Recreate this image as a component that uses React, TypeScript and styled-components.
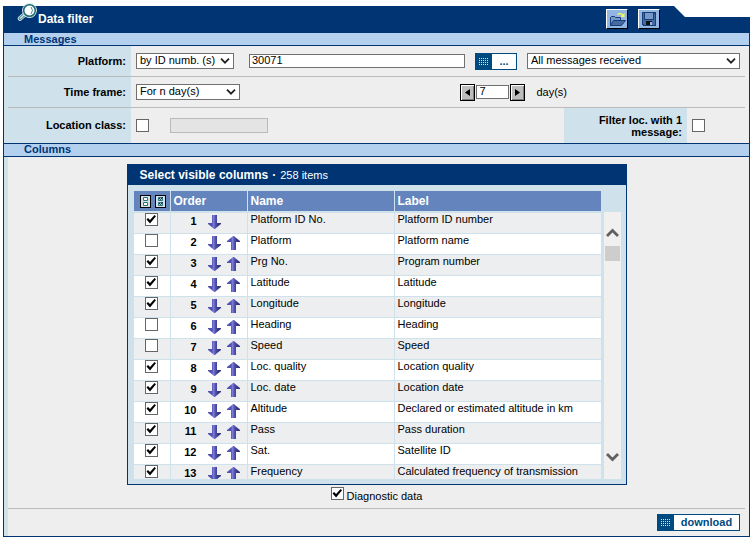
import React from "react";
import styled, { createGlobalStyle, css } from "styled-components";

const navy = "#003473";
const steel = "#004a82";
const pale = "#cfe1ea";
const grey = "#eeeeee";
const rule = "#bababa";

const GlobalStyle = createGlobalStyle`
  * { box-sizing: border-box; }
  body { margin: 0; background: #fff; color: #000; font: 11px/13px "Liberation Sans", Arial, sans-serif; }
  button, input, select { font: inherit; color: inherit; margin: 0; border-radius: 0; }
`;

const Page = styled.main`
  padding: 6px 3px 3px;
`;

const TitleWrap = styled.div`
  position: relative;
`;

const TitleBar = styled.header`
  display: flex;
  justify-content: space-between;
  height: 27px;
  padding: 3px 90px 0 35px;
  background: ${navy};
  clip-path: polygon(0 0, calc(100% - 76px) 0, calc(100% - 65px) 11px, 100% 11px, 100% 100%, 0 100%);
`;

const Magnifier = styled.svg`
  position: absolute;
  left: 14px;
  top: -4px;
  width: 21px;
  height: 20px;
`;

const Title = styled.h1`
  margin: 0;
  padding-top: 3px;
  color: #fff;
  font-size: 12px;
  line-height: 14px;
`;

const Tools = styled.div`
  display: flex;
  gap: 10px;
`;

const ToolButton = styled.button`
  width: 22px;
  height: 20px;
  padding: 0;
  border: 1px solid;
  border-color: #fff #000 #000 #fff;
  background: #93b5e2;
  svg { display: block; width: 20px; height: 18px; }
`;

const Frame = styled.div`
  border: solid ${navy};
  border-width: 0 1px 1px;
  background: ${grey};
`;

const SectionBar = styled.h2<{ $ruled?: boolean }>`
  margin: 0;
  height: ${(p) => (p.$ruled ? 14 : 13)}px;
  padding-left: 20px;
  border-bottom: 1px solid ${navy};
  border-top: ${(p) => (p.$ruled ? `1px solid ${navy}` : "0")};
  background: #b3d1ef;
  color: ${navy};
  font-size: 11px;
  line-height: ${(p) => (p.$ruled ? 11 : 13)}px;
`;

const FormRow = styled.div<{ $tall?: boolean }>`
  display: flex;
  align-items: stretch;
  height: ${(p) => (p.$tall ? 35 : 30)}px;
`;

const Divider = styled.hr`
  height: 1px;
  margin: 0;
  border: solid ${pale};
  border-width: 0 0 0 4px;
  background: ${rule};
  border-right: 4px solid ${grey};
`;

const Caption = styled.label`
  display: flex;
  flex: none;
  align-items: center;
  justify-content: flex-end;
  width: 127px;
  padding-right: 5px;
  background: ${pale};
  font-weight: bold;
  text-align: right;
`;

const SideCaption = styled(Caption)`
  width: 123px;
  margin-left: auto;
  padding-left: 20px;
  line-height: 12px;
`;

const Fields = styled.div`
  display: flex;
  flex: 1;
  align-items: center;
  padding: 0 9px 0 5px;
`;

const ClassFields = styled(Fields)`
  gap: 21px;
`;

const SideFields = styled(Fields)`
  flex: none;
  width: 62px;
`;

const SelectBox = styled.span<{ $width?: number }>`
  position: relative;
  display: flex;
  flex: ${(p) => (p.$width ? `0 0 ${p.$width}px` : "0 1 213px")};
  svg { position: absolute; right: 4px; top: 5px; width: 10px; height: 6px; pointer-events: none; }
`;

const Select = styled.select`
  appearance: none;
  width: 100%;
  height: 16px;
  padding: 0 16px 1px 3px;
  border: 1px solid #707070;
  background: #fff;
  line-height: 13px;
`;

const TextBox = styled.input<{ $width?: number }>`
  flex: ${(p) => (p.$width ? `0 0 ${p.$width}px` : "0 1 216px")};
  min-width: 0;
  width: ${(p) => (p.$width ? `${p.$width}px` : "auto")};
  height: 14px;
  padding: 0 2px 3px;
  border: 1px solid #707070;
  background: #fff;
  &:disabled { height: 15px; border-color: #bababa; background: #e4e4e4; }
`;

const ActionButton = styled.button<{ $wide?: boolean }>`
  display: flex;
  flex: none;
  width: ${(p) => (p.$wide ? 83 : 42)}px;
  height: 17px;
  padding: 0;
  border: 1px solid ${steel};
  background: #fff;
  color: ${steel};
  font-weight: bold;
  line-height: 14px;
  svg { flex: none; width: 16px; height: 15px; background: ${steel}; }
  span { flex: 1; text-align: center; }
`;

const PlatformFields = styled(Fields)`
  > :nth-child(2) { margin-left: 15px; }
  > :nth-child(3) { margin-left: 10px; }
  > :nth-child(4) { margin-left: 10px; }
`;

const DayStepper = styled.div`
  display: flex;
  align-items: center;
  gap: 1px;
  margin-left: auto;
  padding-right: 173px;
  label { padding-left: 10px; }
`;

const StepButton = styled.button`
  width: 15px;
  height: 17px;
  padding: 0;
  border: 1px solid #000;
  background: #bdbdbd;
  box-shadow: inset 1px 1px #fff, inset -1px -1px #808080;
  svg { display: block; width: 13px; height: 15px; }
`;

const Check = styled.input.attrs({ type: "checkbox" })`
  appearance: none;
  display: block;
  flex: none;
  width: 13px;
  height: 13px;
  border: 1px solid #666;
  background: #fff;
  &:checked::before {
    content: "";
    display: block;
    width: 11px;
    height: 11px;
    background: #000;
    clip-path: polygon(9% 50%, 23% 36%, 41% 55%, 82% 9%, 95% 20%, 41% 86%);
  }
`;

const Body = styled.section`
  padding: 7px 4px 5px 0;
  border-left: 4px solid ${pale};
`;

const Panel = styled.section`
  width: 500px;
  max-width: 100%;
  margin: 0 auto;
  border: 1px solid ${navy};
  background: ${pale};
`;

const PanelTitle = styled.h3`
  display: flex;
  align-items: center;
  gap: 4px;
  height: 20px;
  margin: 0;
  padding-left: 12px;
  background: ${navy};
  color: #fff;
  font-size: 12px;
  small { font-size: 11px; font-weight: normal; }
`;

const PanelBody = styled.div`
  display: flex;
  gap: 3px;
  padding: 6px 5px 5px 6px;
`;

const Viewport = styled.div`
  flex: 1;
  height: 288px;
  overflow: hidden;
`;

const Grid = styled.table`
  width: 100%;
  border-collapse: separate;
  border-spacing: 0;
  table-layout: fixed;
`;

const cell = css`
  padding: 0 3px;
  text-align: left;
  vertical-align: top;
  border-right: 1px solid ${pale};
  &:last-child { border-right: 0; }
`;

const HeadCell = styled.th<{ $width?: number }>`
  ${cell}
  width: ${(p) => (p.$width ? `${p.$width}px` : "auto")};
  height: 22px;
  border-bottom: 2px solid ${pale};
  background: #6484be;
  background-clip: padding-box;
  color: #fff;
  font-size: 12px;
  line-height: 20px;
`;

const HeadButtons = styled.div`
  display: flex;
  gap: 4px;
  padding: 4px 0 0 3px;
`;

const MiniButton = styled.button`
  width: 11px;
  height: 13px;
  padding: 0;
  border: 1px solid #000;
  background: ${pale};
  svg { display: block; width: 9px; height: 11px; }
`;

const Row = styled.tr`
  background: #fff;
  &:nth-child(odd) { background: #eceeef; }
`;

const Cell = styled.td`
  ${cell}
  height: 21px;
  border-bottom: 1px solid ${pale};
  line-height: 13px;
`;

const CheckCell = styled(Cell)`
  padding-left: 11px;
`;

const Order = styled.div`
  display: flex;
  align-items: center;
  height: 17px;
  font-weight: bold;
  span { width: 23px; text-align: right; }
  > :nth-child(2) { margin-left: 11px; }
  > :nth-child(3) { margin-left: 6px; }
`;

const ArrowButton = styled.button<{ $up?: boolean }>`
  width: 13px;
  height: 14px;
  padding: 0;
  border: 0;
  background: none;
  svg { display: block; width: 13px; height: 14px; transform: ${(p) => (p.$up ? "scaleY(-1)" : "none")}; }
`;

const ScrollBar = styled.div`
  display: flex;
  flex-direction: column;
  width: 17px;
  margin-top: 21px;
  background: #f0f0f0;
`;

const ScrollButton = styled.button`
  width: 17px;
  height: 17px;
  margin: 13px 0 4px;
  padding: 0;
  border: 0;
  background: none;
  &:last-child { margin: 0 0 13px; }
  svg { display: block; width: 17px; height: 17px; }
`;

const Thumb = styled.div`
  width: 15px;
  height: 15px;
  margin: 0 1px auto;
  background: #cdcdcd;
`;

const Diagnostic = styled.label`
  display: flex;
  justify-content: center;
  gap: 3px;
  height: 23px;
  padding-top: 2px;
  span { padding-top: 3px; }
`;

const Footer = styled.footer`
  display: flex;
  justify-content: flex-end;
  padding: 5px 5px 0;
  border-top: 1px solid ${rule};
`;

const Chevron = () => (
  <svg viewBox="0 0 10 6" aria-hidden="true">
    <path d="M1 .7 5 4.7 9 .7" fill="none" stroke="#222" strokeWidth="1.8" />
  </svg>
);

const Dots = () => (
  <svg viewBox="0 0 16 15" aria-hidden="true" shapeRendering="crispEdges">
    {[4, 6, 8, 10].map((y) =>
      [3, 5, 7, 9, 11].map((x) => <rect key={`${x}-${y}`} x={x} y={y} width="1" height="1" fill="#d5e5ef" />)
    )}
  </svg>
);

const Folder = () => (
  <svg viewBox="0 0 20 18" aria-hidden="true">
    <path d="M3.5 15.5v-8l1-1h3l1 1h5v3" fill="#7899c8" stroke="#173e78" />
    <path d="M3.5 15.5 6.5 10.5h12l-4 5h-11z" fill="#456ba2" stroke="#173e78" />
    <path d="M10.5 4.5q3-2 5.5 1" fill="none" stroke="#ffff45" strokeWidth="1.2" />
    <path d="M17.5 3v4h-4z" fill="#ffff45" />
  </svg>
);

const Disk = () => (
  <svg viewBox="0 0 20 18" aria-hidden="true" shapeRendering="crispEdges">
    <path d="M3 2h14v14H4l-1-1z" fill="#173e78" />
    <path d="M4 3h1v11H4zM15 4h1v11h-1z" fill="#456ba2" />
    <path d="M6 3h8v6H6z" fill="#7899c8" />
    <path d="M5 10h10v5H5z" fill="#456ba2" />
    <path d="M7 11h6v4H7z" fill="#111" />
    <path d="M11 12h2v3h-2z" fill="#93b5e2" />
  </svg>
);

const OrderArrow = ({ id }: { id: string }) => (
  <svg viewBox="0 0 13 14" aria-hidden="true">
    <defs>
      <linearGradient id={id}>
        <stop offset="0" stopColor="#5454b4" />
        <stop offset="0.3" stopColor="#5050b0" />
        <stop offset="0.42" stopColor="#7c7cdc" />
        <stop offset="0.6" stopColor="#4c4ca4" />
        <stop offset="0.8" stopColor="#363680" />
      </linearGradient>
    </defs>
    <path d="M4 0h5v8h4v1l-5 4-1 1H6l-1-1-5-4V8h4z" fill={`url(#${id})`} />
  </svg>
);

const MiniIcon = ({ marked }: { marked?: boolean }) => (
  <svg viewBox="0 0 9 11" aria-hidden="true">
    <path d="M2.5 1.5h4v3h-4zM2.5 6.5h4v3h-4z" fill={marked ? "#a9cbd1" : "#fff"} stroke="#2d7379" />
    {marked && <path d="m3 2 1.5 1.5L7 1M3 7l1.5 1.5L7 6" fill="none" stroke="#102f38" />}
  </svg>
);

const columns: [string, string, boolean][] = [
  ["Platform ID No.", "Platform ID number", true],
  ["Platform", "Platform name", false],
  ["Prg No.", "Program number", true],
  ["Latitude", "Latitude", true],
  ["Longitude", "Longitude", true],
  ["Heading", "Heading", false],
  ["Speed", "Speed", false],
  ["Loc. quality", "Location quality", true],
  ["Loc. date", "Location date", true],
  ["Altitude", "Declared or estimated altitude in km", true],
  ["Pass", "Pass duration", true],
  ["Sat.", "Satellite ID", true],
  ["Frequency", "Calculated frequency of transmission", true],
];

export default function App() {
  return (
    <Page>
      <GlobalStyle />
      <TitleWrap>
        <TitleBar>
          <Title>Data filter</Title>
          <Tools>
            <ToolButton aria-label="Open filter"><Folder /></ToolButton>
            <ToolButton aria-label="Save filter"><Disk /></ToolButton>
          </Tools>
        </TitleBar>
        <Magnifier viewBox="0 0 21 20" aria-hidden="true">
          <path d="M7 13 3 16.5" stroke="#dceef0" strokeWidth="4.5" strokeLinecap="round" />
          <path d="M7 13 3 16.5" stroke="#4d8b92" strokeWidth="3" strokeLinecap="round" />
          <path d="M7 13 3 16.5" stroke="#d3e9ec" strokeWidth="1.2" />
          <circle cx="12.5" cy="8.5" r="6.8" fill="#fff" stroke="#d3e9ec" strokeWidth="1.2" />
          <circle cx="12.5" cy="8.5" r="5.8" fill="#fff" stroke="#1b6971" strokeWidth="1.5" />
          <path d="M14 5q3 3.5 0 7" fill="none" stroke="#4d8b92" />
        </Magnifier>
      </TitleWrap>
      <Frame>
        <SectionBar>Messages</SectionBar>
        <FormRow>
          <Caption htmlFor="platform">Platform:</Caption>
          <PlatformFields>
            <SelectBox $width={98}>
              <Select id="platform"><option>by ID numb. (s)</option></Select>
              <Chevron />
            </SelectBox>
            <TextBox aria-label="Platform ID" defaultValue="30071" />
            <ActionButton aria-label="Browse platforms"><Dots /><span>...</span></ActionButton>
            <SelectBox>
              <Select aria-label="Messages"><option>All messages received</option></Select>
              <Chevron />
            </SelectBox>
          </PlatformFields>
        </FormRow>
        <Divider />
        <FormRow>
          <Caption htmlFor="frame">Time frame:</Caption>
          <Fields>
            <SelectBox $width={104}>
              <Select id="frame"><option>For n day(s)</option></Select>
              <Chevron />
            </SelectBox>
            <DayStepper>
              <StepButton aria-label="Fewer days">
                <svg viewBox="0 0 13 15"><path d="M9 4v7L4 7.5z" /></svg>
              </StepButton>
              <TextBox id="days" $width={33} defaultValue="7" />
              <StepButton aria-label="More days">
                <svg viewBox="0 0 13 15"><path d="M4 4v7l5-3.5z" /></svg>
              </StepButton>
              <label htmlFor="days">day(s)</label>
            </DayStepper>
          </Fields>
        </FormRow>
        <Divider />
        <FormRow $tall>
          <Caption htmlFor="class">Location class:</Caption>
          <ClassFields>
            <Check id="class" />
            <TextBox $width={98} aria-label="Location class value" disabled />
          </ClassFields>
          <SideCaption htmlFor="single">Filter loc. with 1 message:</SideCaption>
          <SideFields><Check id="single" /></SideFields>
        </FormRow>
        <SectionBar $ruled>Columns</SectionBar>
        <Body>
          <Panel>
            <PanelTitle>Select visible columns <span>·</span> <small>258 items</small></PanelTitle>
            <PanelBody>
              <Viewport>
                <Grid>
                  <thead>
                    <tr>
                      <HeadCell $width={37}>
                        <HeadButtons>
                          <MiniButton aria-label="Clear all"><MiniIcon /></MiniButton>
                          <MiniButton aria-label="Select all"><MiniIcon marked /></MiniButton>
                        </HeadButtons>
                      </HeadCell>
                      <HeadCell $width={77}>Order</HeadCell>
                      <HeadCell $width={147}>Name</HeadCell>
                      <HeadCell>Label</HeadCell>
                    </tr>
                  </thead>
                  <tbody>
                    {columns.map(([name, label, shown], i) => (
                      <Row key={name}>
                        <CheckCell><Check aria-label={name} defaultChecked={shown} /></CheckCell>
                        <Cell>
                          <Order>
                            <span>{i + 1}</span>
                            <ArrowButton aria-label="Move down"><OrderArrow id={`down${i}`} /></ArrowButton>
                            {i > 0 && <ArrowButton $up aria-label="Move up"><OrderArrow id={`up${i}`} /></ArrowButton>}
                          </Order>
                        </Cell>
                        <Cell>{name}</Cell>
                        <Cell>{label}</Cell>
                      </Row>
                    ))}
                  </tbody>
                </Grid>
              </Viewport>
              <ScrollBar>
                <ScrollButton aria-label="Scroll up">
                  <svg viewBox="0 0 17 17"><path d="m3 11 5.5-5.5L14 11" fill="none" stroke="#606060" strokeWidth="2.8" /></svg>
                </ScrollButton>
                <Thumb />
                <ScrollButton aria-label="Scroll down">
                  <svg viewBox="0 0 17 17"><path d="m3 5 5.5 5.5L14 5" fill="none" stroke="#606060" strokeWidth="2.8" /></svg>
                </ScrollButton>
              </ScrollBar>
            </PanelBody>
          </Panel>
          <Diagnostic><Check defaultChecked /><span>Diagnostic data</span></Diagnostic>
          <Footer><ActionButton $wide><Dots /><span>download</span></ActionButton></Footer>
        </Body>
      </Frame>
    </Page>
  );
}
